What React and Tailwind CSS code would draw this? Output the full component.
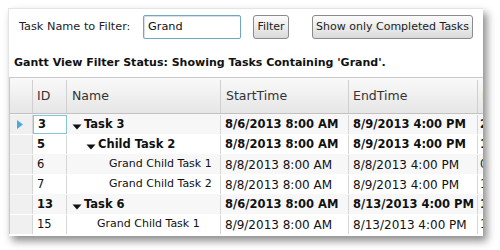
import React from "react";

const rows = [
  { id: 3, name: "Task 3", level: 0, parent: true, start: "8/6/2013 8:00 AM", end: "8/9/2013 4:00 PM", e: "2", selected: true },
  { id: 5, name: "Child Task 2", level: 1, parent: true, start: "8/8/2013 8:00 AM", end: "8/9/2013 4:00 PM", e: "1" },
  { id: 6, name: "Grand Child Task 1", level: 2, start: "8/8/2013 8:00 AM", end: "8/8/2013 4:00 PM", e: "0" },
  { id: 7, name: "Grand Child Task 2", level: 2, start: "8/8/2013 8:00 AM", end: "8/9/2013 4:00 PM", e: "1" },
  { id: 13, name: "Task 6", level: 0, parent: true, start: "8/6/2013 8:00 AM", end: "8/13/2013 4:00 PM", e: "1" },
  { id: 15, name: "Grand Child Task 1", level: 1, start: "8/9/2013 8:00 AM", end: "8/13/2013 4:00 PM", e: "1" },
];

function Expander() {
  return (
    <svg width="10" height="6" viewBox="0 0 10 6" className="mt-[5px] shrink-0">
      <path d="M0.5 0.5 H9.5 L5 5.5 Z" fill="#111" />
    </svg>
  );
}

function NameCell({ row }) {
  const indent = row.parent ? 5 + row.level * 14 : 18 + row.level * 12;
  return (
    <div className="flex items-center whitespace-nowrap" style={{ paddingLeft: indent }}>
      {row.parent && <Expander />}
      <span className={row.parent ? "ml-[2px] text-[11.5px]" : ""}>{row.name}</span>
    </div>
  );
}

export default function App() {
  return (
    <div className="h-[250px] w-[500px] bg-white pl-[8px] pt-[8px] font-['DejaVu_Sans',Verdana,sans-serif] text-[11px] text-[#111]">
      <div className="h-[228px] w-[475px] overflow-hidden border-l border-t border-[#e4e4e4] bg-white shadow-[4px_5px_8px_rgba(0,0,0,0.45)]">
        <div className="mt-[6px] flex h-[24px] items-center pl-[10px]">
          <span className="w-[124px] text-[11.3px] text-[#222]">Task Name to Filter:</span>
          <div className="flex h-[24px] w-[98px] items-center rounded-[2px] border border-[#6fa7c0] bg-white pl-[4px] text-[11.3px] shadow-[inset_1px_1px_1px_rgba(80,120,150,0.25)]">
            Grand
          </div>
          <button className="ml-[12px] h-[24px] w-[36px] rounded-[3px] border border-[#8a8a8a] bg-gradient-to-b from-[#fbfbfb] via-[#ececec] to-[#dadada] text-[11px] text-[#222]">
            Filter
          </button>
          <button className="ml-[23px] h-[24px] w-[161px] rounded-[3px] border border-[#8a8a8a] bg-gradient-to-b from-[#fbfbfb] via-[#ececec] to-[#dadada] text-[11px] text-[#222]">
            Show only Completed Tasks
          </button>
        </div>

        <div className="mt-[17px] h-[14px] pl-[5px] font-bold leading-[14px] text-[#111]">
          Gantt View Filter Status: Showing Tasks Containing 'Grand'.
        </div>

        <div className="mt-[7px] w-[600px] border-l border-t border-[#c9c9c9]">
          <div className="flex h-[36px] border-b border-[#c2c2c2] bg-gradient-to-b from-[#f9f9f9] to-[#e6e6e6] pt-[2px] text-[12.5px] text-[#333]">
            <div className="w-[23px] border-r border-[#d0d0d0]" />
            <div className="flex w-[34px] items-center border-r border-[#d0d0d0] pl-[4px]">ID</div>
            <div className="flex w-[154px] items-center border-r border-[#d0d0d0] pl-[5px]">Name</div>
            <div className="flex w-[128px] items-center border-r border-[#d0d0d0] pl-[5px]">StartTime</div>
            <div className="flex w-[129px] items-center border-r border-[#d0d0d0] pl-[4px]">EndTime</div>
            <div className="flex w-[80px] items-center pl-[4px]">EndTime</div>
          </div>
          {rows.map((row, i) => (
            <div
              key={row.id + "-" + i}
              className={`flex h-[20px] items-center pt-[1px] ${row.parent ? "font-bold" : ""} ${i % 2 === 0 ? "bg-[#f7f7f7]" : "bg-white"}`}
            >
              <div className="flex h-full w-[23px] items-center justify-center border-r border-[#d6d6d6] bg-[#f0f0f0]">
                {row.selected && (
                  <svg width="6" height="9" viewBox="0 0 6 9" className="-ml-[2px]">
                    <path d="M0 0 L6 4.5 L0 9 Z" fill="#4fa8dc" />
                  </svg>
                )}
              </div>
              <div
                className={`flex h-full w-[34px] items-center border-r pl-[4px] text-[11.5px] ${
                  row.selected ? "border border-[#86c6d8] bg-white" : "border-[#d6d6d6]"
                }`}
              >
                {row.id}
              </div>
              <div className="flex h-full w-[154px] items-center border-r border-[#d6d6d6]">
                <NameCell row={row} />
              </div>
              <div
                className={`flex h-full w-[128px] items-center whitespace-nowrap border-r border-[#d6d6d6] pl-[4px] ${
                  row.parent ? "text-[11.5px]" : "text-[12px]"
                }`}
              >
                {row.start}
              </div>
              <div
                className={`flex h-full w-[129px] items-center whitespace-nowrap border-r border-[#d6d6d6] pl-[4px] ${
                  row.parent ? "text-[11.5px]" : "text-[12px]"
                }`}
              >
                {row.end}
              </div>
              <div className="flex h-full w-[80px] items-center pl-[2px] text-[11.5px]">{row.e}</div>
            </div>
          ))}
        </div>
      </div>
    </div>
  );
}
